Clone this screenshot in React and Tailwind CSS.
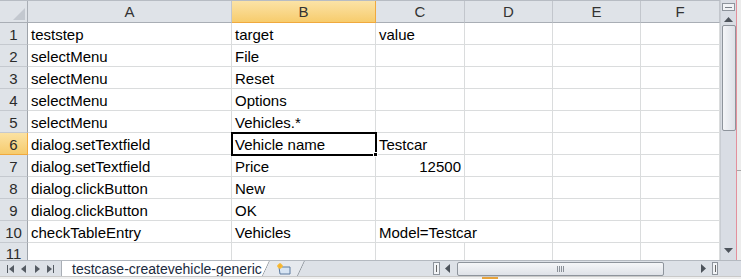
import React from 'react';

const rows = [
  ['teststep', 'target', 'value'],
  ['selectMenu', 'File', ''],
  ['selectMenu', 'Reset', ''],
  ['selectMenu', 'Options', ''],
  ['selectMenu', 'Vehicles.*', ''],
  ['dialog.setTextfield', 'Vehicle name', 'Testcar'],
  ['dialog.setTextfield', 'Price', '12500'],
  ['dialog.clickButton', 'New', ''],
  ['dialog.clickButton', 'OK', ''],
  ['checkTableEntry', 'Vehicles', 'Model=Testcar'],
  ['', '', ''],
];

const grid = 'grid grid-cols-[28px_204px_144px_89px_88px_88px_79px]';

const Tri = ({ dir }) => (
  <svg width="6" height="8" viewBox="0 0 6 8">
    {dir === 'l' ? <path d="M5 0L0 4l5 4z" fill="#555b63" /> : <path d="M1 0l5 4-5 4z" fill="#555b63" />}
  </svg>
);

const Row = ({ n, cells, last }) => {
  const active = n === 6;
  return (
    <div className={`${grid} ${last ? 'h-[17px]' : 'h-[22px]'}`}>
      <div
        className={`flex items-end justify-center border-r border-b ${
          active
            ? 'bg-gradient-to-b from-[#fbe2a2] to-[#f6cb6d] border-r-[#f0a93e] border-b-[#f0a93e]'
            : 'bg-[#dfe3e8] border-r-[#9ea3aa] border-b-[#c5c9cf]'
        } text-[#2b2b2b]`}
      >
        <span className="translate-y-[1px]">{n}</span>
      </div>
      {cells.map((c, i) => (
        <div
          key={i}
          className={`relative flex items-end px-[3px] whitespace-nowrap border-b border-[#dadcdd] ${
            n === 10 && i === 2 ? '' : 'border-r'
          } ${n === 7 && i === 2 ? 'justify-end' : ''}`}
        >
          <span className="relative z-10 translate-y-[1px]">{c}</span>
          {active && i === 1 && (
            <div className="absolute -left-[1px] -top-[1px] w-[146px] h-[24px] border-2 border-black z-20">
              <div className="absolute -right-[3px] -bottom-[3px] w-[5px] h-[5px] bg-black border border-white" />
            </div>
          )}
        </div>
      ))}
      {['', '', ''].map((_, i) => (
        <div key={'e' + i} className="border-r border-b border-[#dadcdd]" />
      ))}
    </div>
  );
};

export default function App() {
  return (
    <div className="w-[741px] h-[279px] overflow-hidden bg-white text-[15px] leading-[20px] text-black font-['Liberation_Sans',sans-serif] flex flex-col">
      <div className="flex h-[260px]">
        {/* sheet */}
        <div className="w-[720px] h-[260px] overflow-hidden border-t border-[#b7bcc3]">
          <div className={`${grid} h-[22px] text-[#333]`}>
            <div className="relative bg-[#dfe3e8] border-r border-b border-[#a9aeb5]">
              <svg className="absolute right-[2px] bottom-[2px]" width="12" height="12" viewBox="0 0 12 12">
                <path d="M12 0V12H0z" fill="#c3c8cf" />
              </svg>
            </div>
            {['A', 'B', 'C', 'D', 'E', 'F'].map((l) => (
              <div
                key={l}
                className={`flex items-center justify-center border-r border-b ${
                  l === 'B'
                    ? 'bg-gradient-to-b from-[#fbe3a6] to-[#f7cc6c] border-[#f0a93e]'
                    : 'bg-[#dfe3e8] border-r-[#c2c6cc] border-b-[#a9aeb5]'
                }`}
              >
                {l}
              </div>
            ))}
          </div>
          {rows.map((r, i) => (
            <Row key={i} n={i + 1} cells={r} last={i === 10} />
          ))}
        </div>
        {/* vertical scrollbar */}
        <div className="w-[16px] h-[260px] bg-[#d9dde4] flex flex-col items-center border-l border-[#c9cdd3]">
          <div className="mt-[3px] w-[13px] h-[8px] border border-[#8e949c] bg-[#f1f3f6] flex items-center justify-center">
            <div className="w-[7px] h-[1px] bg-[#7a8088]" />
          </div>
          <svg className="mt-[6px]" width="9" height="5" viewBox="0 0 9 5">
            <path d="M0 5L4.5 0 9 5z" fill="#4d535b" />
          </svg>
          <div className="mt-[3px] w-[14px] h-[106px] rounded-[2px] border border-[#8e949c] bg-gradient-to-r from-[#f4f5f8] to-[#dde1e8]" />
          <div className="flex-1" />
          <svg className="mb-[7px]" width="9" height="5" viewBox="0 0 9 5">
            <path d="M0 0L4.5 5 9 0z" fill="#4d535b" />
          </svg>
        </div>
        <div className="w-[1px] bg-[#e3909c]" />
        <div className="flex-1 bg-[#ececec] flex flex-col">
          <div className="h-[170px]" />
          <div className="h-[1px] bg-[#a7a7a7]" />
        </div>
      </div>

      {/* sheet tabs + horizontal scrollbar */}
      <div className="flex h-[16px] bg-[#dde1e7] border-t border-[#b4b9c0]">
        <div className="w-[62px] flex items-center justify-around px-[4px] border-r border-[#a9aeb5]">
          <div className="flex items-center gap-[1px]">
            <div className="w-[1px] h-[8px] bg-[#555b63]" />
            <Tri dir="l" />
          </div>
          <Tri dir="l" />
          <Tri dir="r" />
          <div className="flex items-center gap-[1px]">
            <Tri dir="r" />
            <div className="w-[1px] h-[8px] bg-[#555b63]" />
          </div>
        </div>
        <div className="relative w-[208px] h-[15px] bg-white [clip-path:polygon(0_0,100%_0,calc(100%-7px)_100%,0_100%)] flex items-center pl-[10px] text-[14px] text-[#1b2a3e] leading-none">
          testcase-createvehicle-generic
          <svg className="absolute right-0 top-0" width="8" height="15" viewBox="0 0 8 15">
            <path d="M7.5 0L0.5 15" stroke="#8e949c" strokeWidth="1" />
          </svg>
        </div>
        <div className="relative -ml-[7px] w-[42px] h-[15px] bg-[#e6e9ee] [clip-path:polygon(7px_0,100%_0,calc(100%-7px)_100%,0_100%)] flex items-center justify-center">
          <svg width="16" height="12" viewBox="0 0 16 12">
            <path d="M3 4h11v7H4z" fill="#d7e4f3" stroke="#5d7a9e" strokeWidth="1" />
            <circle cx="4" cy="3" r="2.5" fill="#f6c342" />
            <path d="M4 0v6M1 3h6" stroke="#f9a825" strokeWidth="0.8" />
          </svg>
          <svg className="absolute right-0 top-0" width="8" height="15" viewBox="0 0 8 15">
            <path d="M7.5 0L0.5 15" stroke="#8e949c" strokeWidth="1" />
          </svg>
        </div>
        <div className="flex-1" />
        <div className="w-[287px] flex items-center">
          <div className="w-[7px] h-[13px] border border-[#8e949c] bg-[#f2f4f7] flex items-center justify-center">
            <div className="w-[1px] h-[7px] bg-[#666]" />
          </div>
          <svg className="ml-[5px]" width="5" height="9" viewBox="0 0 5 9">
            <path d="M5 0L0 4.5 5 9z" fill="#4d535b" />
          </svg>
          <div className="ml-[7px] w-[207px] h-[14px] rounded-[2px] border border-[#8e949c] bg-gradient-to-b from-[#f5f6f8] to-[#dfe2e8] flex items-center justify-center gap-[1px]">
            <div className="w-[1px] h-[6px] bg-[#8a9098]" />
            <div className="w-[1px] h-[6px] bg-[#8a9098]" />
            <div className="w-[1px] h-[6px] bg-[#8a9098]" />
            <div className="w-[1px] h-[6px] bg-[#8a9098]" />
          </div>
          <div className="flex-1" />
          <svg width="5" height="9" viewBox="0 0 5 9">
            <path d="M0 0L5 4.5 0 9z" fill="#4d535b" />
          </svg>
          <div className="ml-[6px] mr-[2px] w-[6px] h-[13px] border border-[#8e949c] bg-[#f2f4f7] flex items-center justify-center">
            <div className="w-[1px] h-[7px] bg-[#666]" />
          </div>
        </div>
        <div className="w-[21px] bg-[#d9dde4]" />
      </div>
      <div className="flex h-[3px] bg-[#f0f0f0] border-t border-[#c9c9c9]">
        <div className="w-[482px]" />
        <div className="w-[16px] bg-[#e8a33c]" />
      </div>
    </div>
  );
}
